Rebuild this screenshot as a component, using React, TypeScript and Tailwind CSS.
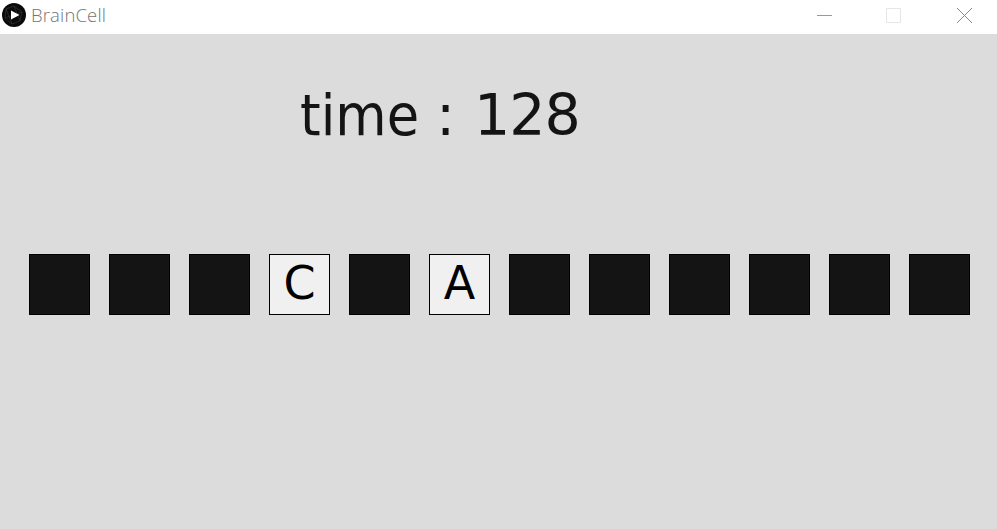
const cells = ['', '', '', 'C', '', 'A', '', '', '', '', '', ''];

function TitleBar() {
  return (
    <header className="flex h-[34px] items-start bg-white">
      <svg className="mt-[3px] ml-[2px] h-6 w-6 shrink-0" viewBox="0 0 24 24" fill="none">
        <circle cx="12" cy="12" r="12" fill="#0a0a0a" />
        <path d="M4 6 12 3 20 9 18 18 10 21 3 15ZM12 3 18 18M4 6 10 21M3 15 20 9" stroke="#3a3a3a" strokeWidth=".6" />
        <path d="M9 7.500 17.500 12 9 16.500Z" fill="#fff" />
      </svg>
      <span className="mt-[3px] ml-[5px] font-['Open_Sans',sans-serif] text-[18.5px] leading-[24px] font-light tracking-[0.15px] text-[#757575]">BrainCell</span>
      <svg className="ml-auto h-[34px] w-[200px]" viewBox="0 0 200 34" fill="none">
        <path d="M20 15.500H35" stroke="#999" />
        <path d="M89.500 8.500H103.500V22.500H89.500Z" stroke="#e6e6e6" />
        <path d="M160 8 175 23M175 8 160 23" stroke="#888" />
      </svg>
    </header>
  );
}

export default function App() {
  return (
    <div className="h-[529px] w-[997px] overflow-hidden bg-[#dcdcdc] font-['DejaVu_Sans',sans-serif]">
      <TitleBar />
      <main className="h-[495px]">
        <h1 className="flex h-[220px] pt-[46px] pl-[300px] text-[57px] leading-[70px] text-[#141414]">
          <span className="w-[136px] origin-left scale-x-[0.925]">time</span>
          <span className="w-[38px]">:</span>
          <span className="tracking-[-1px]">128</span>
        </h1>
        <div className="flex gap-[19px] pl-[29px]">
          {cells.map((letter, i) => (
            <div
              key={i}
              className={`flex h-[61px] w-[61px] shrink-0 items-center justify-center border border-black pb-[3px] text-[46px] leading-none text-black ${letter ? 'bg-[#f0f0f0]' : 'bg-[#141414]'}`}
            >
              {letter}
            </div>
          ))}
        </div>
      </main>
    </div>
  );
}
